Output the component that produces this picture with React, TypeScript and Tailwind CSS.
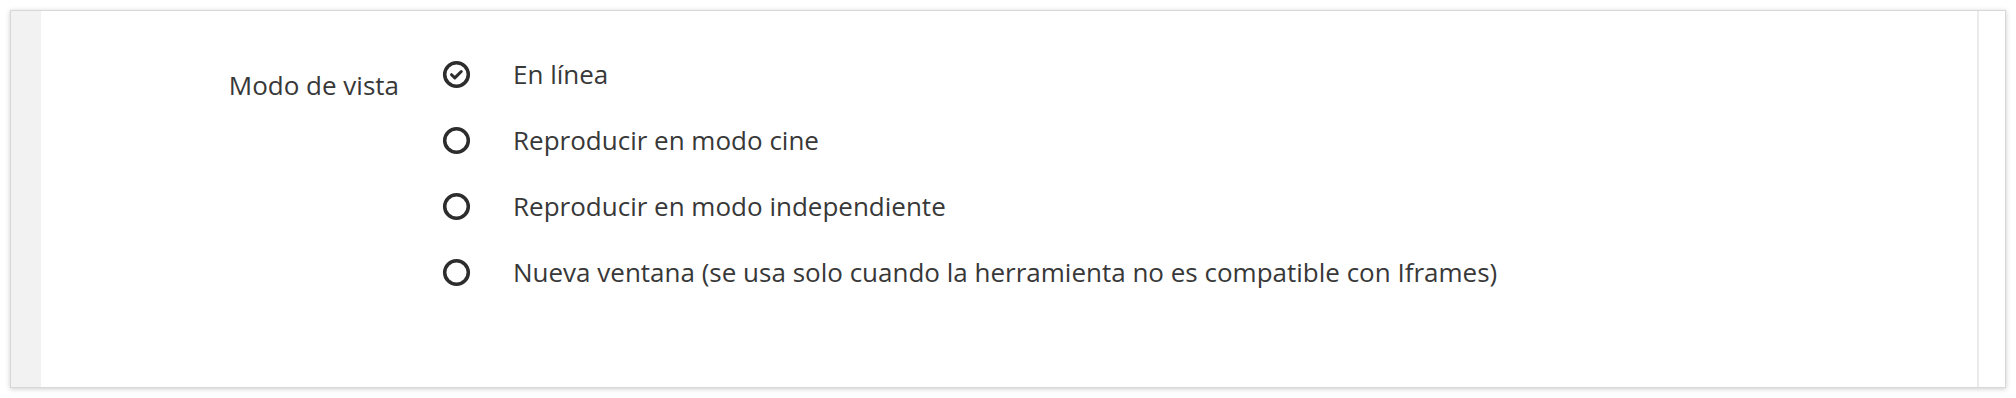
const options = [
  "En línea",
  "Reproducir en modo cine",
  "Reproducir en modo independiente",
  "Nueva ventana (se usa solo cuando la herramienta no es compatible con Iframes)",
];

function RadioIcon({ checked }: { checked: boolean }) {
  return (
    <svg width="29" height="29" viewBox="0 0 28 28" className="shrink-0">
      <circle cx="14" cy="14" r="11.4" fill="none" stroke="#2d2d2d" strokeWidth="3.4" />
      {checked && (
        <path d="M9.2 14.2l3.2 3.1 6.2-6.2" fill="none" stroke="#2d2d2d" strokeWidth="2.9" strokeLinecap="round" strokeLinejoin="round" />
      )}
    </svg>
  );
}

export default function App() {
  return (
    <div className="w-[2016px] h-[398px] bg-white p-[10px] font-['Open_Sans',sans-serif] text-[#383838]">
      <div className="flex h-full border border-[#d8d8d8] shadow-[0_1px_5px_rgba(0,0,0,0.2)] bg-white">
        {/* side strip */}
        <div className="w-[30px] bg-[#f2f2f2]" />

        <div className="flex-1 flex pt-[45px]">
          <div className="w-[358px] text-right text-[26px] leading-[36px] pt-[11px]">Modo de vista</div>

          <div className="flex flex-col gap-[30px] pl-[43px]">
            {options.map((o, i) => (
              <div key={o} className="flex items-center h-[36px]">
                <RadioIcon checked={i === 0} />
                <span className="ml-[42px] text-[26px] leading-[36px] whitespace-nowrap">{o}</span>
              </div>
            ))}
          </div>
        </div>

        <div className="w-[28px] border-l-2 border-[#ebebeb]" />
      </div>
    </div>
  );
}
